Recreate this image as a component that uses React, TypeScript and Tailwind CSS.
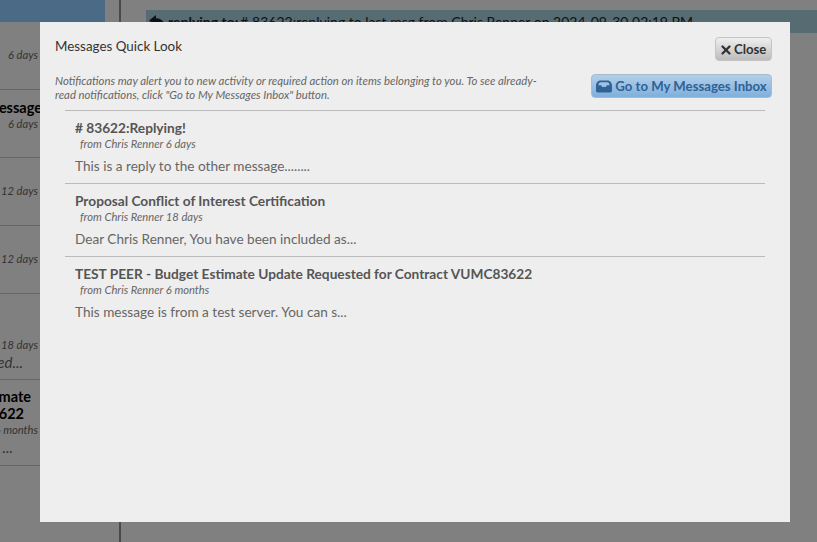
import { X } from "lucide-react";

const font = "font-['Lato','Noto_Sans',sans-serif]";

const sideRows = [
  { height: "h-[68px]", top: "pt-[25px]", titles: [], age: "6 days", note: "", notePad: "" },
  { height: "h-[68px]", top: "pt-[9px]", titles: [{ text: "message", pad: "-mr-[2px]" }], age: "6 days", note: "", notePad: "" },
  { height: "h-[68px]", top: "pt-[25px]", titles: [], age: "12 days", note: "", notePad: "" },
  { height: "h-[68px]", top: "pt-[25px]", titles: [], age: "12 days", note: "", notePad: "" },
  { height: "h-[86px]", top: "pt-[43px]", titles: [], age: "18 days", note: "ed...", notePad: "pr-[17px]" },
  {
    height: "h-[86px]",
    top: "pt-[8px]",
    titles: [
      { text: "mate", pad: "pr-[9px]" },
      { text: "622", pad: "pr-[16px]" },
    ],
    age: "6 months",
    note: "...",
    notePad: "pr-[27px]",
  },
];

const messages = [
  {
    title: "# 83622:Replying!",
    from: "from Chris Renner 6 days",
    body: "This is a reply to the other message........",
  },
  {
    title: "Proposal Conflict of Interest Certification",
    from: "from Chris Renner 18 days",
    body: "Dear Chris Renner, You have been included as...",
  },
  {
    title: "TEST PEER - Budget Estimate Update Requested for Contract VUMC83622",
    from: "from Chris Renner 6 months",
    body: "This message is from a test server. You can s...",
  },
];

function SideColumn() {
  return (
    <div className="w-[121px] shrink-0 border-r-2 border-[#4a4a4a]">
      <div className="h-[22px] w-[105px] bg-[#4a6a85]" />
      {sideRows.map((row, index) => (
        <div key={index} className={`${row.height} border-b border-[#666666]`}>
          <div className={`flex w-[40px] flex-col items-end overflow-hidden whitespace-nowrap ${row.top}`}>
            {row.titles.map((title) => (
              <p key={title.text} className={`text-[14.5px] leading-[17px] font-bold text-black ${title.pad}`}>
                {title.text}
              </p>
            ))}
            <p className="pr-[2px] text-[11.2px] leading-[16px] text-[#333333] italic">{row.age}</p>
            {row.note ? (
              <p className={`text-[15px] leading-[18px] text-[#333333] italic ${row.notePad}`}>{row.note}</p>
            ) : null}
          </div>
        </div>
      ))}
    </div>
  );
}

function InboxIcon() {
  return (
    <svg width="16" height="13" viewBox="0 0 16 13" className="shrink-0" fill="#2f6295">
      <path d="M4.500 0.500h7c2.400 0 4.500 2.300 4.500 5V10.800c0 1-.8 1.700-1.700 1.700H1.700C.8 12.500 0 11.800 0 10.800V5.500C0 2.800 2.100.5 4.500.5ZM4.700 2.300C3.500 2.300 2.700 3.500 2.300 5.300H5.200L6.100 7H9.900L10.800 5.300H13.700C13.300 3.500 12.500 2.300 11.300 2.300Z" fillRule="evenodd" />
    </svg>
  );
}

function ReplyIcon() {
  return (
    <svg width="17" height="14" viewBox="0 0 17 14" className="shrink-0" fill="#111111">
      <path d="M7 0 0 5.500 7 11V7.600C11 7.600 13.500 8.800 14.500 14 16.500 8 14 3.400 7 3.200Z" />
    </svg>
  );
}

export default function App() {
  return (
    <div className={`relative h-[542px] w-[817px] overflow-hidden bg-[#808080] ${font}`}>
      <div className="flex h-full">
        <SideColumn />
        <div className="flex-1 pt-[10px] pl-[25px]">
          <div className="flex h-[23px] items-center gap-[2px] bg-[#566b72] pl-[3px] text-[14px] whitespace-nowrap text-[#111111]">
            <ReplyIcon />
            <b>replying to:</b>
            <span># 83622:replying to last msg from Chris Renner on 2024-09-30 02:19 PM</span>
          </div>
        </div>
      </div>

      <div className="absolute top-[22px] left-[40px] h-[500px] w-[750px] bg-[#eeeeee] text-[#555555]">
        <div className="flex items-start justify-between pt-[15px] pr-[18px] pl-[15px]">
          <h2 className="text-[13.4px] leading-[18px] text-[#333333]">Messages Quick Look</h2>
          <button className="flex h-[24px] w-[57px] items-center gap-[1px] rounded-[4px] border border-[#c4c4c4] bg-gradient-to-b from-[#efefef] to-[#bcbcbc] pt-[1px] pl-[3px] text-[13.2px] font-bold text-[#333333]">
            <X size={14} strokeWidth={4} />
            Close
          </button>
        </div>
        <div className="mt-[13px] flex items-start justify-between pr-[18px] pl-[15px]">
          <p className="w-[490px] text-[11.35px] leading-[14px] text-[#666666] italic">
            Notifications may alert you to new activity or required action on items belonging to you. To see already-read notifications, click "Go to My Messages Inbox" button.
          </p>
          <button className="flex h-[24px] w-[181px] items-center justify-center gap-[3px] rounded-[4px] border border-[#a9bccd] bg-gradient-to-b from-[#b3d0ea] to-[#7fafdc] pt-[1px] text-[13.2px] font-bold whitespace-nowrap text-[#2f6295]">
            <InboxIcon />
            Go to My Messages Inbox
          </button>
        </div>
        <div className="mt-[8px] mr-[25px] ml-[25px]">
          {messages.map((message) => (
            <div key={message.title} className="h-[73px] border-t border-[#bbbbbb] pt-[8px] pl-[10px]">
              <h3 className="text-[13.7px] leading-[17px] font-bold text-[#555555]">{message.title}</h3>
              <p className="pl-[5px] text-[11.2px] leading-[15px] text-[#666666] italic">{message.from}</p>
              <p className="mt-[6px] text-[13.6px] leading-[18px] text-[#666666]">{message.body}</p>
            </div>
          ))}
        </div>
      </div>
    </div>
  );
}
